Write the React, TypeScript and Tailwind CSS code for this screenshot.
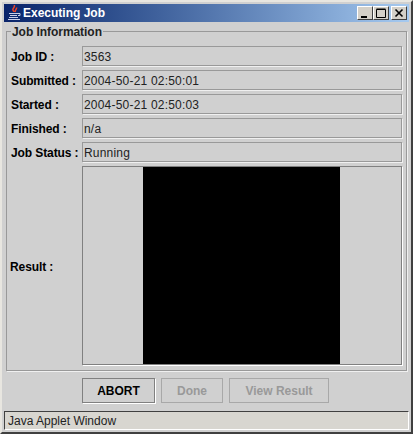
const rows = [
  { label: "Job ID :", value: "3563" },
  { label: "Submitted :", value: "2004-50-21 02:50:01" },
  { label: "Started :", value: "2004-50-21 02:50:03" },
  { label: "Finished :", value: "n/a" },
  { label: "Job Status :", value: "Running" },
];

function JavaIcon() {
  return (
    <svg width="16" height="16" viewBox="0 0 16 16" className="shrink-0">
      <path d="M8 0c2 2-2 3-1 5 .3 1 1 1.500 1 2M10.500 2.500c.5 2-2 2.500-1 4.500" stroke="#e8442a" strokeWidth="1.500" fill="none" />
      <path d="M3 8h9v1H3zM4 10h7v1H4zM3 12h9v1H3zM2 14h12v1H2z" fill="#c9cfea" />
      <path d="M12 8.500h2v2h-2" stroke="#c9cfea" fill="none" />
    </svg>
  );
}

function WindowButton({ kind }: { kind: "min" | "max" | "close" }) {
  return (
    <div className="w-[16px] h-[14px] bg-[#d4d0c8] border border-t-white border-l-white border-r-[#404040] border-b-[#404040] flex items-center justify-center">
      <svg width="10" height="10" viewBox="0 0 10 10">
        {kind === "min" && <path d="M1 8h6v2H1z" fill="#000" />}
        {kind === "max" && <path d="M0.500 1.500h9v8h-9zM0.500 1h9" stroke="#000" fill="none" />}
        {kind === "close" && <path d="M1.500 1.500l7 7M8.500 1.500l-7 7" stroke="#000" strokeWidth="1.600" />}
      </svg>
    </div>
  );
}

export default function App() {
  return (
    <div className="w-[413px] h-[434px] bg-[#d0d0d0] border-2 border-t-[#e8e6e0] border-l-[#e8e6e0] border-r-[#404040] border-b-[#404040] p-[2px] flex flex-col font-['Liberation_Sans',Arial,sans-serif] overflow-hidden">
      {/* title bar */}
      <div className="h-[18px] shrink-0 flex items-center pl-[2px] pr-[2px] bg-gradient-to-r from-[#0a246a] to-[#a6caf0]">
        <JavaIcon />
        <span className="ml-[1px] text-white text-[12px] font-bold leading-none">Executing Job</span>
        <div className="ml-auto flex items-center">
          <WindowButton kind="min" />
          <WindowButton kind="max" />
          <div className="ml-[2px]">
            <WindowButton kind="close" />
          </div>
        </div>
      </div>

      {/* group box */}
      <div className="relative mt-[9px] mx-[2px] h-[340px] shrink-0 border border-[#999999] shadow-[1px_1px_0_#f0f0f0] pt-[14px] pl-[3px] pr-[4px] flex flex-col">
        <span className="absolute left-[4px] top-[-8px] bg-[#d0d0d0] px-[1px] text-[12px] leading-[16px] font-bold tracking-[-0.05px] text-[#222222]">
          Job Information
        </span>
        <div className="flex flex-col gap-[4px]">
          {rows.map((row) => (
            <div key={row.label} className="flex items-center h-[20px]">
              <span className="w-[71px] ml-[1px] pt-[1px] text-[12px] font-bold tracking-[-0.1px] text-black leading-none">{row.label}</span>
              <div className="flex-1 h-[20px] border border-[#999999] shadow-[1px_1px_0_#f0f0f0] pl-[1px] pt-[1px] flex items-center text-[12px] text-[#222222] tracking-[0.2px]">
                {row.value}
              </div>
            </div>
          ))}
        </div>
        <div className="flex items-center mt-[4px]">
          <span className="w-[72px] pt-[2px] text-[12px] font-bold tracking-[-0.1px] text-black leading-none">Result :</span>
          <div className="flex-1 h-[199px] border border-[#808080] shadow-[1px_1px_0_#ffffff] flex justify-center pr-[2px]">
            <div className="w-[197px] h-full bg-black" />
          </div>
        </div>
      </div>

      {/* buttons */}
      <div className="flex mt-[7px] ml-[78px] gap-[6px] shrink-0">
        <button className="w-[73px] h-[25px] border border-[#808080] shadow-[1px_1px_0_#ffffff] text-[12px] font-bold text-black">
          ABORT
        </button>
        <button className="w-[62px] h-[25px] border border-[#a8a8a8] text-[12px] font-bold text-[#999999]">
          Done
        </button>
        <button className="w-[100px] h-[25px] border border-[#a8a8a8] text-[12px] font-bold text-[#999999]">
          View Result
        </button>
      </div>

      {/* status bar */}
      <div className="mt-[8px] h-[19px] shrink-0 bg-[#d8d6d0] border border-t-[#404040] border-l-[#404040] border-r-white border-b-white flex items-center pl-[3px] text-[12px] text-[#222222]">
        Java Applet Window
      </div>
    </div>
  );
}
